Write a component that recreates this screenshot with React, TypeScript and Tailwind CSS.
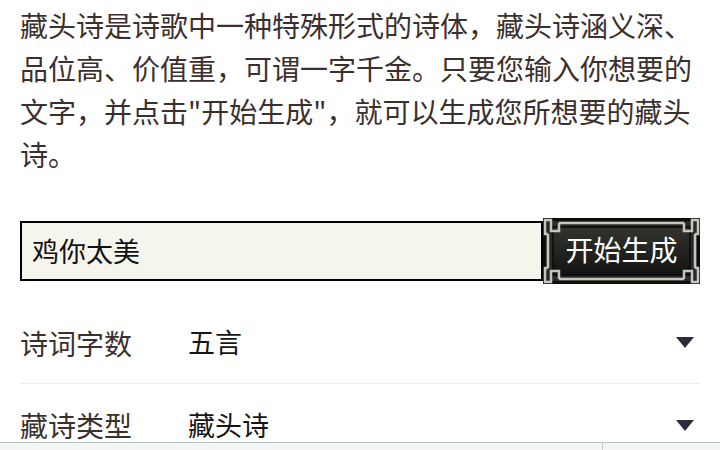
import React from "react";

const font = { fontFamily: '"Noto Sans CJK SC", "Noto Sans", sans-serif' };

function ButtonFrame() {
  return (
    <svg className="absolute inset-0" width="157" height="66" viewBox="0 0 157 66">
      <defs>
        <linearGradient id="g" x1="0" y1="0" x2="0" y2="1">
          <stop offset="0" stopColor="#33342f" />
          <stop offset="1" stopColor="#131412" />
        </linearGradient>
      </defs>
      <rect x="0" y="0" width="157" height="66" fill="#0e0f0d" />
      <rect x="3" y="3" width="151" height="60" fill="#2a2b27" />
      <rect x="10" y="9" width="137" height="48" fill="url(#g)" stroke="#080808" strokeWidth="1.5" />
      <g fill="none" stroke="#c4c7c1" strokeWidth="2.5">
        <line x1="16" y1="5" x2="141" y2="5" />
        <line x1="16" y1="61" x2="141" y2="61" />
        <line x1="5" y1="16" x2="5" y2="50" />
        <line x1="152" y1="16" x2="152" y2="50" />
        <path d="M16 5 V13 H8 V2 H2 V16 H5" />
        <path d="M141 5 V13 H149 V2 H155 V16 H152" />
        <path d="M16 61 V53 H8 V64 H2 V50 H5" />
        <path d="M141 61 V53 H149 V64 H155 V50 H152" />
      </g>
    </svg>
  );
}

function Triangle() {
  return (
    <svg width="18" height="11" viewBox="0 0 18 11">
      <path d="M0 0 H18 L9 11 Z" fill="#2a2e3a" />
    </svg>
  );
}

function Row({ label, value, border }: { label: string; value: string; border?: boolean }) {
  return (
    <div className={`flex items-center h-[82px] ${border ? "border-b border-[#ebebeb]" : ""}`}>
      <div className="w-[168px] text-[28px] text-[#3b302e]">{label}</div>
      <div className="flex-1 text-[27px] text-[#161616]">{value}</div>
      <div className="pr-[6px] flex items-center">
        <Triangle />
      </div>
    </div>
  );
}

export default function App() {
  return (
    <div className="w-[720px] h-[450px] bg-white overflow-hidden relative" style={font}>
      <div className="px-5 pt-[4px]">
        <p className="text-[28px] leading-[43px] text-[#3b302e]">
          藏头诗是诗歌中一种特殊形式的诗体，藏头诗涵义深、品位高、价值重，可谓一字千金。只要您输入你想要的文字，并点击"开始生成"，就可以生成您所想要的藏头诗。
        </p>
        <div className="flex items-center mt-[42px]">
          <div className="flex-1 h-[60px] border-2 border-black bg-[#f5f5ee] flex items-center px-[10px] text-[27px] text-[#111]">
            鸡你太美
          </div>
          <div className="relative w-[157px] h-[66px] flex items-center justify-center">
            <ButtonFrame />
            <span className="relative text-[28px] text-white -mt-[4px]">开始生成</span>
          </div>
        </div>
        <div className="mt-[18px]">
          <Row label="诗词字数" value="五言" border />
          <Row label="藏诗类型" value="藏头诗" />
        </div>
      </div>
      <div className="absolute left-0 right-0 top-[442px] h-[40px] bg-[#f4f6f4] border-t border-[#b7c2c8] flex">
        <div className="w-[603px] border-r border-[#c9cccc]" />
      </div>
    </div>
  );
}
